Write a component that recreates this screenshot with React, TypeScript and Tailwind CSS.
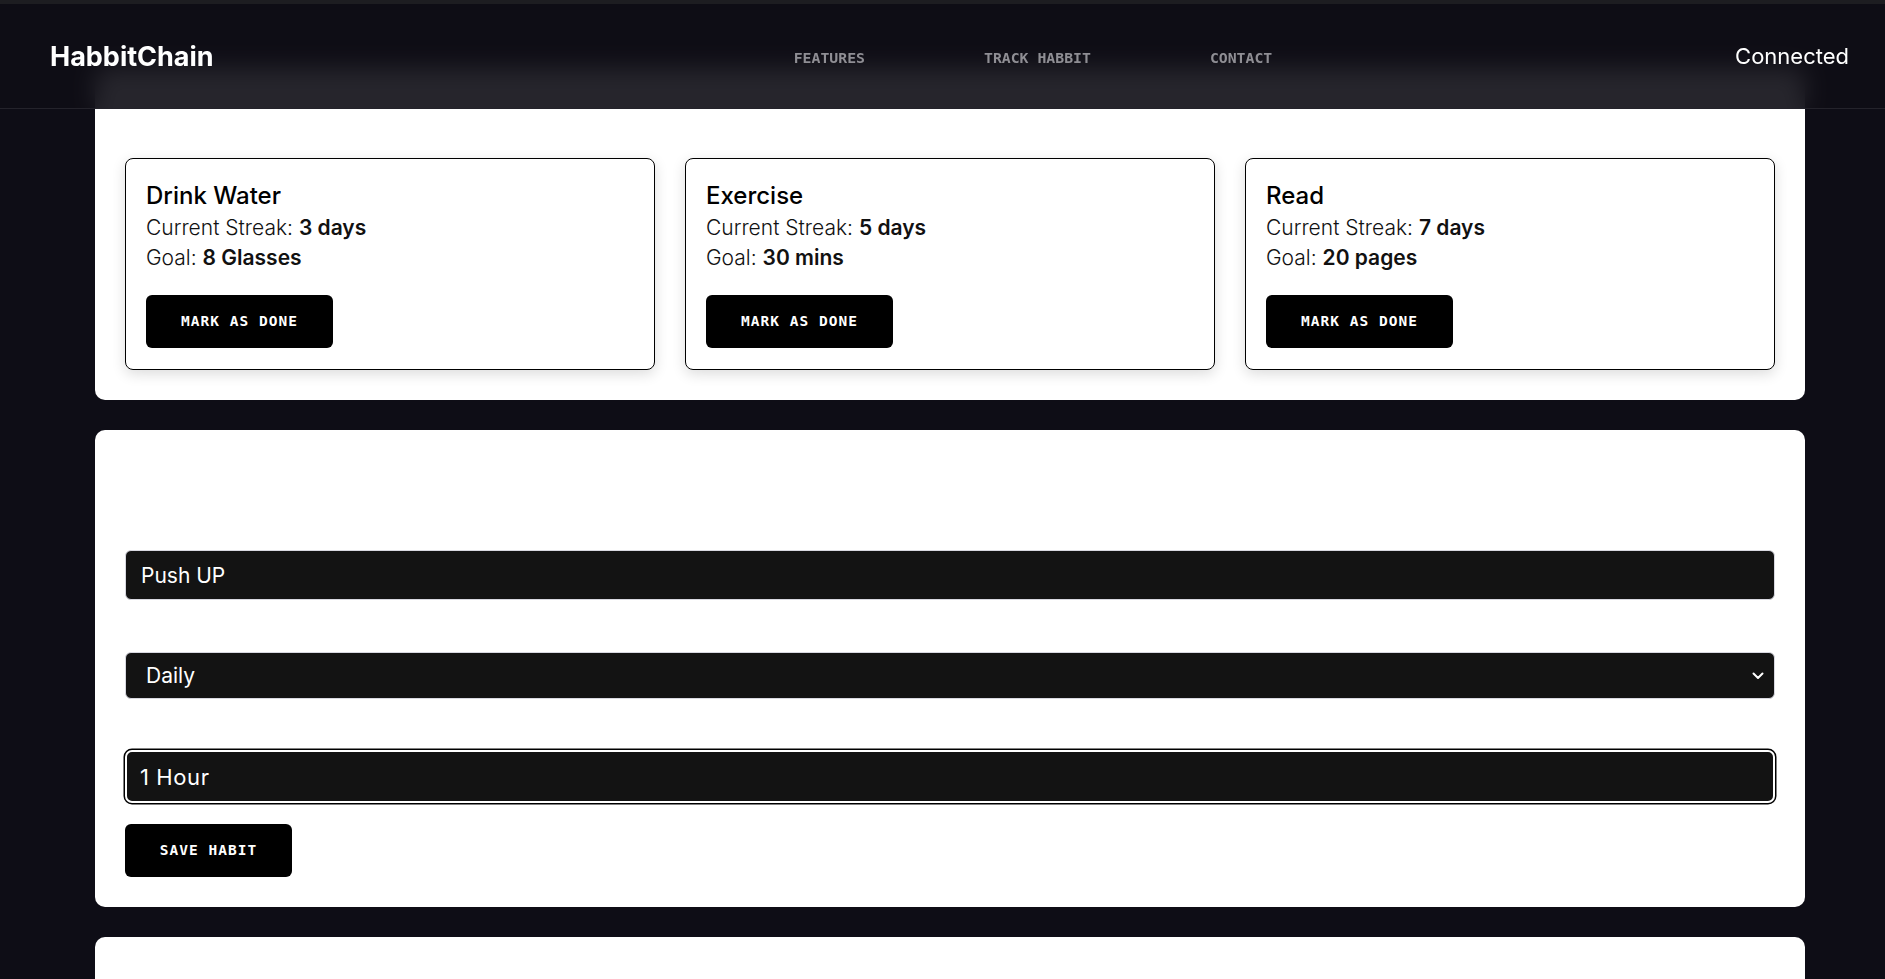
import { useState } from "react"

const habits = [
  { name: "Drink Water", streak: "3 days", goal: "8 Glasses" },
  { name: "Exercise", streak: "5 days", goal: "30 mins" },
  { name: "Read", streak: "7 days", goal: "20 pages" },
]

const sans = { fontFamily: "Inter, 'Noto Sans', sans-serif" }

function Header() {
  return (
    <header className="fixed top-0 inset-x-0 z-10 h-[109px] border-t-4 border-b border-t-[#1d1d21] border-b-[#24232b] bg-[#0e0d15]/90 backdrop-blur-md flex items-center">
      <div className="mt-[3px] pl-[50px] text-[27px] font-bold text-white" style={sans}>
        HabbitChain
      </div>
      <nav className="mt-[4px] ml-[580px] flex gap-[119px] font-['DejaVu_Sans_Mono',monospace] text-[14.8px] font-bold text-[#8f8e94]">
        <a href="#features">FEATURES</a>
        <a href="#track">TRACK HABBIT</a>
        <a href="#contact">CONTACT</a>
      </nav>
      <button className="ml-auto pr-[36px] text-[22px] text-white" style={sans}>
        Connected
      </button>
    </header>
  )
}

function HabitCard({ name, streak, goal }: { name: string; streak: string; goal: string }) {
  return (
    <div className="rounded-[8px] border border-black bg-white px-5 pt-[21px] pb-[21px] shadow-[0_4px_14px_rgba(0,0,0,0.14)]" style={sans}>
      <h3 className="text-[24px] leading-[32px] font-medium text-black">{name}</h3>
      <p className="mt-[1px] text-[21px] leading-[30px] font-light text-[#111]">
        Current Streak: <span className="font-semibold">{streak}</span>
      </p>
      <p className="text-[21px] leading-[30px] font-light text-[#111]">
        Goal: <span className="font-semibold">{goal}</span>
      </p>
      <button className="mt-[22px] h-[53px] w-[187px] rounded-[6px] bg-black font-['DejaVu_Sans_Mono',monospace] text-[14.5px] font-bold tracking-[1px] text-white">
        MARK AS DONE
      </button>
    </div>
  )
}

export default function App() {
  const [name, setName] = useState("Push UP")
  const [freq, setFreq] = useState("Daily")
  const [dur, setDur] = useState("1 Hour")

  return (
    <div className="min-h-screen bg-[#0e0d16]">
      <Header />
      <main className="ml-[95px] w-[1710px] pt-[68px] pb-10 flex flex-col gap-[30px]">
        <section className="rounded-[10px] bg-white px-[30px] pt-[90px] pb-[30px]">
          <div className="grid grid-cols-3 gap-[30px]">
            {habits.map((h) => (
              <HabitCard key={h.name} {...h} />
            ))}
          </div>
        </section>

        <section className="rounded-[10px] bg-white px-[30px] pt-[120px] pb-[30px] flex flex-col" style={sans}>
          <input
            value={name}
            onChange={(e) => setName(e.target.value)}
            className="h-[50px] w-full rounded-[6px] border border-[#d8d8e0] bg-[#131313] px-[15px] text-[21px] text-white outline-none"
          />
          <div className="relative mt-[52px]">
            <select
              value={freq}
              onChange={(e) => setFreq(e.target.value)}
              className="h-[47px] w-full appearance-none rounded-[6px] border border-[#d8d8e0] bg-[#131313] px-[20px] text-[21px] text-white outline-none"
            >
              <option>Daily</option>
              <option>Weekly</option>
              <option>Monthly</option>
            </select>
            <svg
              className="pointer-events-none absolute right-[11px] top-1/2 -translate-y-1/2"
              width="12"
              height="8"
              viewBox="0 0 12 8"
              fill="none"
            >
              <path d="M1.5 1.5 6 6l4.5-4.5" stroke="white" strokeWidth="2" strokeLinecap="round" strokeLinejoin="round" />
            </svg>
          </div>
          <input
            value={dur}
            onChange={(e) => setDur(e.target.value)}
            className="mt-[51px] h-[53px] w-full rounded-[7px] border-2 border-white bg-[#131313] px-[13px] text-[22px] tracking-[0.6px] text-white outline-none shadow-[0_0_0_1.5px_#000]"
          />
          <button className="mt-[21px] h-[53px] w-[167px] rounded-[6px] bg-black font-['DejaVu_Sans_Mono',monospace] text-[14.5px] font-bold tracking-[1px] text-white">
            SAVE HABIT
          </button>
        </section>

        <section className="h-[300px] rounded-[10px] bg-white" />
      </main>
    </div>
  )
}
